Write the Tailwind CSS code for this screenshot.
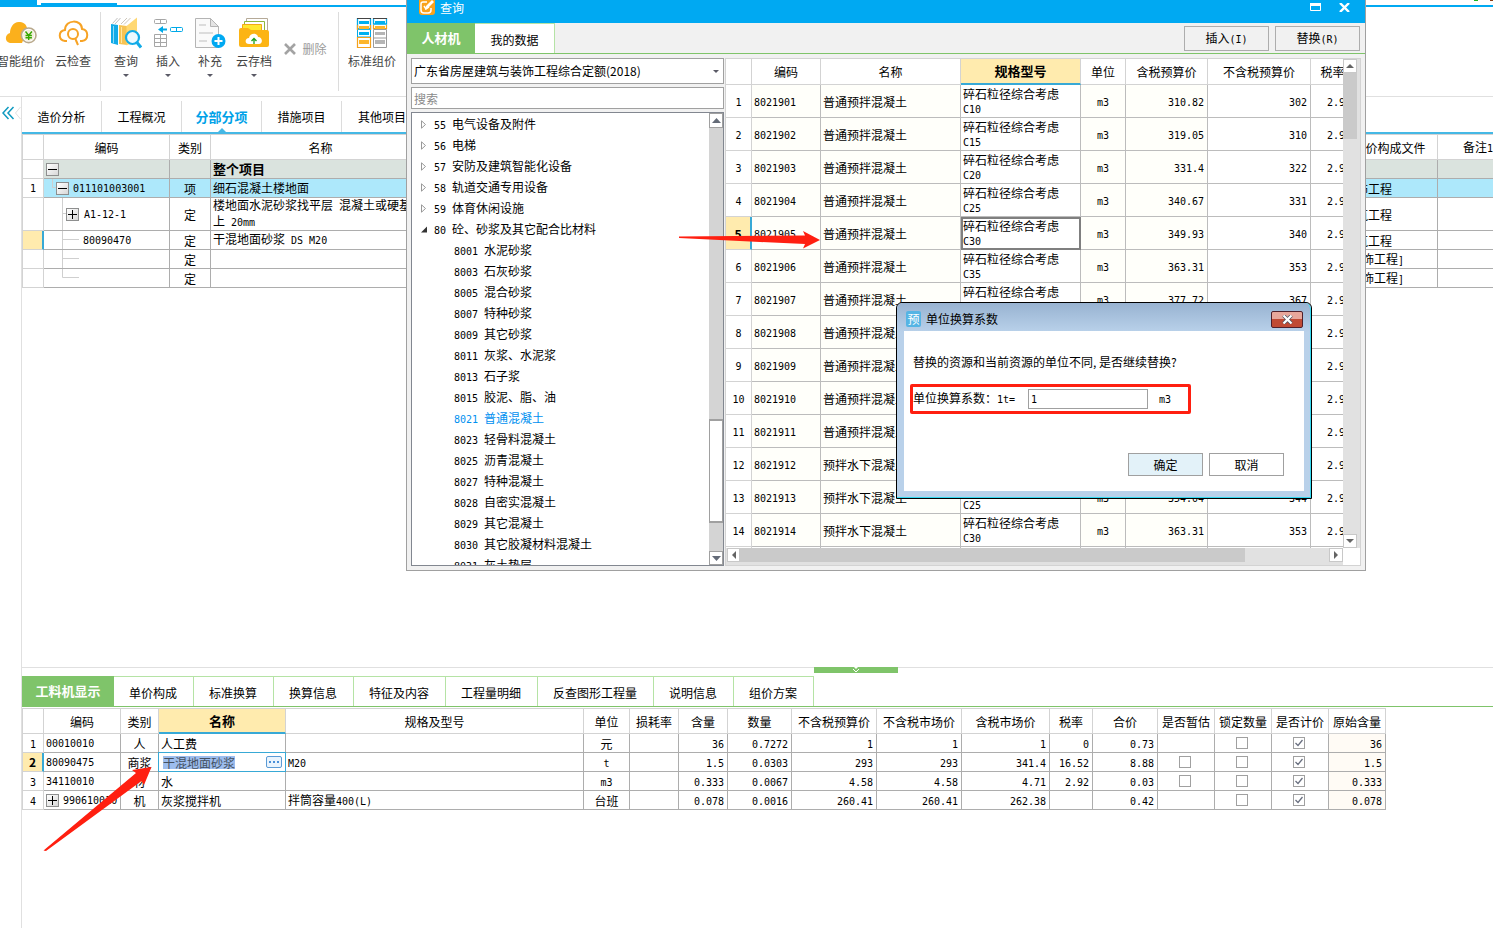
<!DOCTYPE html>
<html lang="zh-CN">
<head>
<meta charset="utf-8">
<title>工程计价</title>
<script src="https://cdn.jsdelivr.net/npm/@tailwindcss/browser@4"></script>
</head>
<body class="relative h-screen overflow-hidden bg-white text-black text-[12px] leading-[14px] font-['Noto_Sans_CJK_SC',sans-serif] flex flex-col">

<!-- Ribbon -->
<header class="shrink-0">
  <div class="relative h-[7px] border-b-2 border-[#00a9f2] flex items-end">
    <div class="h-full w-[37px] bg-[#00a9f2]"></div>
    <div class="ml-1 h-[2px] w-[76px] bg-[#00a9f2]"></div>
    <div class="ml-auto mr-3 self-start h-px w-1 bg-[#1fb41f]"></div>
    <div class="self-start h-px w-[3px] bg-[#8a3a12]"></div>
  </div>
  <nav class="h-[90px] border-b border-[#e0e0e0] flex items-start text-[#444] whitespace-nowrap">
    <button class="w-[42px] mr-1 pt-[10px] flex flex-col items-center gap-[5px]">
      <svg class="size-8 shrink-0" viewBox="0 0 32 32"><path d="M5 26C-1 25 0 17 5 16 5 10 9 4 15 5c5 0 8 5 7 9l-5 12z" fill="#fbb01c"/><circle cx="23.7" cy="18.3" r="7.3" fill="#fff" stroke="#b9a98c" stroke-width="1.6"/><circle cx="23.7" cy="18.3" r="5.6" fill="#f4efdc"/><path d="M20.5 14.5l3.2 4 3.2-4M23.7 18v5M20.5 18.5h6.4M20.5 20.8h6.4" stroke="#35a800" stroke-width="1.4" fill="none"/></svg>
      <span>智能组价</span>
    </button>
    <button class="w-[54px] pt-[10px] flex flex-col items-center gap-[5px]">
      <svg class="size-8" viewBox="0 0 32 32" fill="none" stroke="#f7a325" stroke-width="2"><path d="M10 24H8C1 23 1 14 8 13 8 2 25 2 25 12c7 1 7 11 0 12h-2"/><circle cx="16" cy="17" r="5"/><path d="M18 21l3 7"/></svg>
      <span>云检查</span>
    </button>
    <div class="mt-[5px] h-[79px] w-px bg-[#dcdcdc]"></div>
    <button class="w-[50px] pt-[10px] flex flex-col items-center gap-[5px]">
      <svg class="size-8" viewBox="0 0 32 32"><path d="M1 7l6-6.500h8L8 8z" fill="#fff"/><path d="M2.500 6.500l5-5.500M5 7l5.500-6" stroke="#b0b0b0" stroke-width=".8"/><path d="M1 7l7 1v20l-7-2z" fill="#12abe8"/><path d="M3.500 9v17" stroke="#8fdcf8"/><path d="M9 7l7-6.500h11L18 9z" fill="#fff"/><path d="M11 7l6-6M14 7.500l6.500-6.500" stroke="#c0b8a8" stroke-width=".8"/><path d="M9 8l8 1v19l-8-1z" fill="#f6c352"/><path d="M11.500 10v16" stroke="#ffe6a0"/><path d="M16.500 9L27 .500v23l-10.500 5z" fill="#ffd873"/><circle cx="22.500" cy="20.500" r="6.500" fill="#eefaff" stroke="#12abe8" stroke-width="2.200"/><path d="M27 25.500l4 5" stroke="#12abe8" stroke-width="3"/></svg>
      <span>查询</span>
      <svg class="w-[6px] h-[3px] mt-[1px]" viewBox="0 0 6 3"><path d="M0 0h6L3 3z" fill="#5a5a66"/></svg>
    </button>
    <button class="w-[34px] pt-[10px] flex flex-col items-center gap-[5px]">
      <svg class="size-8" viewBox="0 0 32 32" fill="none" stroke="#a6a6a6"><rect x="2.500" y="2.500" width="12" height="4" rx="1"/><path d="M8.500 2.500v4"/><path d="M2.500 17.500h12v12h-12zM2.500 21.500h12M2.500 25.500h12M8.500 17.500v12"/><rect x="18.500" y="10.500" width="12" height="4" rx="1" stroke="#00a9e8"/><path d="M24.500 10.500v4" stroke="#00a9e8"/><path d="M6 12.500l5-3.500v2.500h4v2h-4V16z" fill="#00a9e8" stroke="none"/></svg>
      <span>插入</span>
      <svg class="w-[6px] h-[3px] mt-[1px]" viewBox="0 0 6 3"><path d="M0 0h6L3 3z" fill="#5a5a66"/></svg>
    </button>
    <button class="w-[50px] pt-[10px] flex flex-col items-center gap-[5px]">
      <svg class="size-8" viewBox="0 0 32 32"><path d="M1.500 1.500h15l8 8v21h-23z" fill="#fafafa" stroke="#b4b4b4"/><path d="M16.500 1.500v8h8z" fill="#e4e4e4" stroke="#b4b4b4"/><path d="M5 8h7M5 16h14M5 24h8" stroke="#dcdcdc" stroke-width="2"/><circle cx="24.500" cy="24" r="7" fill="#00a9f2"/><path d="M24.500 20v8M20.500 24h8" stroke="#fff" stroke-width="2"/></svg>
      <span>补充</span>
      <svg class="w-[6px] h-[3px] mt-[1px]" viewBox="0 0 6 3"><path d="M0 0h6L3 3z" fill="#5a5a66"/></svg>
    </button>
    <button class="w-[38px] pt-[10px] flex flex-col items-center gap-[5px]">
      <svg class="size-8" viewBox="0 0 32 32"><path d="M8.500 14V1.500h21V16" fill="#fff" stroke="#b5aa98"/><path d="M6.500 14V4.500h20V16" fill="#fff" stroke="#8fb83a"/><path d="M4.500 16V7.500h19V16" fill="#ffe92e" stroke="#f0a818"/><path d="M1 13q0-2 2-2h7l3 2h16q2 0 2 2v13q0 2-2 2H3q-2 0-2-2z" fill="#fcb414"/><path d="M11 27c-5 0-4-6 0-6 1-6 9-5 9-1 5 0 5 7 1 7z" fill="#fff"/><path d="M16 27v-5M13.500 24l2.500-2.500 2.500 2.500" stroke="#1da11d" stroke-width="1.300" fill="none"/></svg>
      <span>云存档</span>
      <svg class="w-[6px] h-[3px] mt-[1px]" viewBox="0 0 6 3"><path d="M0 0h6L3 3z" fill="#5a5a66"/></svg>
    </button>
    <button class="w-[65px] h-[84px] flex items-center justify-center gap-[6px] text-[#9a9a9a]" disabled>
      <svg class="size-3" viewBox="0 0 12 12"><path d="M1 1l10 10M11 1L1 11" stroke="#a3a3a3" stroke-width="2.600"/></svg>
      <span>删除</span>
    </button>
    <div class="mt-[5px] h-[79px] w-px bg-[#dcdcdc]"></div>
    <button class="w-[66px] pt-[10px] flex flex-col items-center gap-[5px]">
      <svg class="size-8" viewBox="0 0 32 32" fill="none"><path d="M1.500 1v11h13V1M17.500 1v6h13V1" stroke="#00a9e8" stroke-width="1.300"/><path d="M1 1.500h14M17 1.500h14" stroke="#444"/><path d="M3 4h10v3H3zM19 4h10v3H19zM3 15h10v3H3z" fill="#00b0f0"/><path d="M1.500 12v8h13v-8z" stroke="#00a9e8"/><path d="M1.500 8v5M14.500 8v5M17.500 8v3.500h13V8M1.500 20.500v10h13v-10z" stroke="#f4a11c" stroke-width="1.200"/><path d="M3 9h10v3H3zM19 9h10v3H19zM3 23h10v4H3z" fill="#fdb52a"/><path d="M17.500 12.500v18h13v-18zM17.500 21h13" stroke="#9a9a9a"/><path d="M19 15h10v3H19zM19 23h10v4H19z" fill="#b5b5b5"/></svg>
      <span>标准组价</span>
    </button>
  </nav>
</header>

<div class="flex-1 min-h-0 flex">
  <aside class="relative w-[22px] shrink-0 border-r border-[#e0e0e0]">
    <button aria-label="收起" class="block pt-[9px] pl-[2px]"><svg class="w-[20px] h-[14px]" viewBox="0 0 20 14" fill="none"><path d="M6.500 1L1 7l5.500 6M11.500 1L6 7l5.500 6" stroke="#0f9ac0" stroke-width="1.500"/><path d="M18.500 1L13.500 7l5 6" stroke="#e0e0e0"/></svg></button>
  </aside>

  <main class="flex-1 min-w-0 flex flex-col">
    <nav class="shrink-0 h-[37px] pt-1 border-b-2 border-[#45b8e5] flex">
      <a href="#" class="w-20 border-r border-[#dcdcdc] flex items-center justify-center">造价分析</a>
      <a href="#" class="w-20 border-r border-[#dcdcdc] flex items-center justify-center">工程概况</a>
      <a href="#" class="relative w-20 border-r border-[#dcdcdc] flex items-center justify-center text-[13px] font-bold text-[#00a2e8]">分部分项<svg class="absolute bottom-0 left-[36px] w-2 h-1" viewBox="0 0 8 4"><path d="M0 4l4-4 4 4z" fill="#45b8e5"/></svg></a>
      <a href="#" class="w-20 border-r border-[#dcdcdc] flex items-center justify-center">措施项目</a>
      <a href="#" class="w-20 flex items-center justify-center">其他项目</a>
    </nav>

    <div class="flex-1 min-h-0 overflow-hidden">
      <table class="w-[calc(100%+26px)] table-fixed border-separate border-spacing-0 border-l border-t border-[#d3d3d3]">
        <colgroup><col class="w-[21px]"><col class="w-[126px]"><col class="w-[41px]"><col class="w-[220px]"><col><col class="w-[96px]"><col class="w-[81px]"></colgroup>
        <thead><tr id="upperHead"></tr></thead>
        <tbody id="upperBody"></tbody>
      </table>
    </div>

    <!-- Resource detail panel -->
    <section class="relative shrink-0 h-[261px] border-t border-[#e0e0e0]">
      <button aria-label="折叠面板" class="absolute -top-px left-[792px] w-[84px] h-[6px] bg-[#7fc46a] flex justify-center"><svg class="w-2 h-[6px]" viewBox="0 0 8 6" fill="none" stroke="#fff"><path d="M2 0h4L4 2z" fill="#fff" stroke="none"/><path d="M1 2l3 3 3-3"/></svg></button>
      <nav class="mt-2 h-[31px] border-b border-[#7fc46a] flex whitespace-nowrap">
        <a href="#" class="w-[92px] bg-[#7fc46a] text-white font-bold text-[13px] flex items-center justify-center">工料机显示</a>
        <a href="#" class="pl-[15px] pr-4 pt-[2px] border-t border-r border-[#b5e3a5] flex items-center">单价构成</a>
        <a href="#" class="pl-[15px] pr-4 pt-[2px] border-t border-r border-[#b5e3a5] flex items-center">标准换算</a>
        <a href="#" class="pl-[15px] pr-4 pt-[2px] border-t border-r border-[#b5e3a5] flex items-center">换算信息</a>
        <a href="#" class="pl-[15px] pr-4 pt-[2px] border-t border-r border-[#b5e3a5] flex items-center">特征及内容</a>
        <a href="#" class="pl-[15px] pr-4 pt-[2px] border-t border-r border-[#b5e3a5] flex items-center">工程量明细</a>
        <a href="#" class="pl-[15px] pr-4 pt-[2px] border-t border-r border-[#b5e3a5] flex items-center">反查图形工程量</a>
        <a href="#" class="pl-[15px] pr-4 pt-[2px] border-t border-r border-[#b5e3a5] flex items-center">说明信息</a>
        <a href="#" class="pl-[15px] pr-4 pt-[2px] border-t border-r border-[#b5e3a5] flex items-center">组价方案</a>
      </nav>
      <table class="mt-px w-[1364px] table-fixed border-separate border-spacing-0 border-l border-t border-[#d3d3d3] whitespace-nowrap">
        <colgroup><col class="w-[21px]"><col class="w-[77px]"><col class="w-[38px]"><col class="w-[127px]"><col class="w-[298px]"><col class="w-[46px]"><col class="w-[49px]"><col class="w-[49px]"><col class="w-[64px]"><col class="w-[85px]"><col class="w-[85px]"><col class="w-[88px]"><col class="w-[43px]"><col class="w-[65px]"><col class="w-[57px]"><col class="w-[57px]"><col class="w-[57px]"><col class="w-[57px]"></colgroup>
        <thead><tr id="lowerHead"></tr></thead>
        <tbody id="lowerBody"></tbody>
      </table>
    </section>
  </main>
</div>

<!-- Query window -->
<section class="absolute left-[406px] top-0 w-[960px] h-[571px] border border-t-0 border-[#a0a0a0] bg-[#f1f1f1] flex flex-col">
  <header class="shrink-0 h-[23px] bg-[#00a9f2] text-white flex items-start pl-3">
    <svg class="w-4 h-[15px]" viewBox="0 0 16 15"><path d="M0 0h16v12q0 3-3 3H3q-3 0-3-3z" fill="#f9a21b"/><path d="M8 2H4Q2 2 2 4v6q0 3 3 3h4q3 0 3-3V8" fill="none" stroke="#fff" stroke-width="1.500"/><path d="M6 10l1-4 6-6 2 2-6 6z" fill="#fff"/><path d="M5 6l2 3 3-2" stroke="#fff" stroke-width="1.500" fill="none"/></svg>
    <h2 class="ml-[5px] mt-px">查询</h2>
    <button aria-label="最大化" class="ml-auto mt-[3px] mr-[18px]"><svg class="w-[11px] h-2" viewBox="0 0 11 8"><path d="M.5.5h10v7H.5zM0 1.500h11" fill="none" stroke="#fff"/><path d="M0 0h11v3H0z" fill="#fff"/></svg></button>
    <button aria-label="关闭" class="mt-[3px] mr-[15px]"><svg class="w-[11px] h-[9px]" viewBox="0 0 11 9"><path d="M1 0l9 9M10 0L1 9" stroke="#fff" stroke-width="2.400"/></svg></button>
  </header>
  <nav class="shrink-0 h-[31px] border-b border-[#7fc46a] flex">
    <a href="#" class="w-[68px] bg-[#7fc46a] text-white font-bold text-[13px] flex items-center justify-center">人材机</a>
    <a href="#" class="w-20 pt-[2px] bg-white border-t border-r border-[#b5e3a5] flex items-center justify-center">我的数据</a>
    <button class="ml-auto mt-[3px] w-[85px] h-[25px] border border-[#adadad]" data-t="插入(I)"></button>
    <button class="ml-[6px] mr-[5px] mt-[3px] w-[85px] h-[25px] border border-[#adadad]" data-t="替换(R)"></button>
  </nav>
  <div class="flex-1 min-h-0 p-1 flex gap-px">
    <div class="w-[313px] shrink-0 flex flex-col gap-[3px]">
      <div class="relative">
        <select aria-label="定额库" class="block w-full h-[26px] pl-[2px] appearance-none bg-white border border-[#a0a0a0] rounded-none"><option>广东省房屋建筑与装饰工程综合定额(2018)</option></select>
        <svg class="absolute right-[5px] top-[12px] w-[6px] h-[3px]" viewBox="0 0 6 3"><path d="M0 0h6L3 3z" fill="#5a5a66"/></svg>
      </div>
      <input aria-label="搜索" placeholder="搜索" class="h-[22px] shrink-0 px-[2px] bg-white border border-[#a0a0a0] placeholder:text-[#8a8a8a]">
      <div class="flex-1 min-h-0 border border-[#828790] bg-white flex">
        <ul id="tree" class="flex-1 min-w-0 overflow-hidden pt-px"></ul>
        <div class="w-[14px] bg-[#d4d4d4] flex flex-col">
          <button aria-label="向上" class="h-[15px] bg-white border border-[#a0a0a0] flex items-center justify-center"><svg class="w-[9px] h-[5px]" viewBox="0 0 9 5"><path d="M0 5l4.500-5L9 5z" fill="#646b78"/></svg></button>
          <div class="mt-[291px] h-[104px] bg-white border-y-2 border-x border-[#a0a0a0]"></div>
          <button aria-label="向下" class="mt-auto h-[14px] bg-white border border-[#a0a0a0] flex items-center justify-center"><svg class="w-[9px] h-[5px]" viewBox="0 0 9 5"><path d="M0 0l4.500 5L9 0z" fill="#646b78"/></svg></button>
        </div>
      </div>
    </div>
    <div class="flex-1 min-w-0 border border-[#d3d3d3] bg-[#e1e1e1] flex flex-col">
      <div class="flex h-[489px] min-h-0">
        <div class="flex-1 min-w-0 overflow-hidden bg-white">
          <table class="w-[629px] table-fixed border-separate border-spacing-0">
            <colgroup><col class="w-[26px]"><col class="w-[69px]"><col class="w-[140px]"><col class="w-[120px]"><col class="w-[45px]"><col class="w-[82px]"><col class="w-[103px]"><col class="w-[44px]"></colgroup>
            <thead><tr id="queryHead"></tr></thead>
            <tbody id="queryBody"></tbody>
          </table>
        </div>
        <div class="w-[17px] pr-[3px] flex flex-col">
          <button aria-label="向上" class="h-[14px] bg-white border border-[#c8c8c8] flex items-center justify-center"><svg class="w-2 h-1" viewBox="0 0 8 4"><path d="M0 4l4-4 4 4z" fill="#646464"/></svg></button>
          <div class="h-[66px] bg-[#cacaca]"></div>
          <button aria-label="向下" class="mt-auto h-[14px] bg-white border border-[#c8c8c8] flex items-center justify-center"><svg class="w-2 h-1" viewBox="0 0 8 4"><path d="M0 0l4 4 4-4z" fill="#646464"/></svg></button>
        </div>
      </div>
      <div class="flex-1 flex">
        <div class="flex-1 h-[14px] pl-px flex">
          <button aria-label="向左" class="w-[13px] bg-white border border-[#c8c8c8] flex items-center justify-center"><svg class="w-1 h-2" viewBox="0 0 4 8"><path d="M4 0L0 4l4 4z" fill="#646464"/></svg></button>
          <div class="w-[505px] bg-[#cacaca]"></div>
          <button aria-label="向右" class="ml-auto w-[14px] bg-white border border-[#c8c8c8] flex items-center justify-center"><svg class="w-1 h-2" viewBox="0 0 4 8"><path d="M0 0l4 4-4 4z" fill="#646464"/></svg></button>
        </div>
        <div class="w-[17px] bg-white"></div>
      </div>
    </div>
  </div>
</section>

<!-- Unit conversion dialog -->
<section class="absolute left-[896px] top-[302px] w-[416px] h-[197px] rounded-t-md border border-black bg-[#b9d1ea] overflow-hidden">
  <div class="h-full border-r border-b border-[#34d9f0] bg-linear-to-b from-[#98b3d1] to-[#b9d1ea] to-15% pl-[7px] pr-[6px] pb-[6px] flex flex-col rounded-t-md">
    <header class="h-[28px] shrink-0 flex items-center pl-[2px] pt-1">
      <span class="w-[15px] h-4 rounded-xs bg-[#55b4e4] text-white flex items-center justify-center">预</span>
      <h2 class="ml-[5px]">单位换算系数</h2>
      <button aria-label="关闭" class="ml-auto mr-px w-[32px] h-[17px] rounded-xs border border-[#50202a] bg-linear-to-b from-[#e8a79b] from-45% to-[#c04a34] to-50% flex items-center justify-center"><svg class="w-[11px] h-[9px]" viewBox="0 0 11 9"><path d="M1.500.5l8 8M9.500.5l-8 8" stroke="#4a5260" stroke-width="3.600"/><path d="M1.500.5l8 8M9.500.5l-8 8" stroke="#fff" stroke-width="2.200"/></svg></button>
    </header>
    <form class="flex-1 bg-white pt-[24px] flex flex-col">
      <p class="pl-[9px]">替换的资源和当前资源的单位不同<span class="inline-block w-[6px]">,</span>是否继续替换?</p>
      <div class="ml-[6px] mt-[15px] w-[281px] h-[30px] rounded-xs border-3 border-[#ff1f10] flex items-center">
        <label for="ratio" class="w-[115px]"><span data-t="单位换算系数"></span><span class="inline-block w-3">：</span><span data-t="1t="></span></label>
        <input id="ratio" value="1" class="w-[120px] h-5 px-[2px] border border-[#a0a0a0] bg-white text-[10px] font-['DejaVu_Sans_Mono',monospace]">
        <span class="ml-[11px]" data-t="m3"></span>
      </div>
      <div class="mt-[39px] flex justify-end gap-[6px] pr-5">
        <button type="button" class="w-[75px] h-[23px] border border-[#a0a0a0] bg-[#e3f2f9]">确定</button>
        <button type="button" class="w-[75px] h-[23px] border border-[#a0a0a0] bg-white">取消</button>
      </div>
    </form>
  </div>
</section>

<!-- Annotation arrows -->
<svg class="absolute left-[678px] top-[230px] w-[143px] h-5 pointer-events-none" viewBox="678 230 143 20"><path d="M679 236.500L805 235.500 803 231 820 240 803 248.500 805 244 760 242 679 238z" fill="#ff1f10"/></svg>
<svg class="absolute left-[42px] top-[765px] w-[112px] h-[88px] pointer-events-none" viewBox="42 765 112 88"><path d="M43.500 850.500L136 773 132 770 151.500 767 144 785 141.500 781 46 851z" fill="#ff1f10"/></svg>

<script>
// Latin runs use a half-width monospace so that they take half of a Chinese character each.
const t = s => String(s).replace(/[\x20-\x7e]+/g, m => `<span class="text-[10px] font-['DejaVu_Sans_Mono',monospace] whitespace-pre-wrap">${m}</span>`);
document.querySelectorAll('[data-t]').forEach(e => e.innerHTML = t(e.dataset.t));
const $ = id => document.getElementById(id);
const th = (s, c = '') => `<th class="p-0 pt-px font-normal text-center border-r border-b border-[#d3d3d3] ${c}">${t(s)}</th>`;
const expander = sign => `<button aria-label="展开" class="size-[13px] shrink-0 border border-[#8e8f8f] bg-linear-to-br from-white to-[#d8d8d8] p-0 flex items-center justify-center"><svg class="size-[9px]" viewBox="0 0 9 9"><path d="${sign === '+' ? 'M0 4.500h9M4.500 0v9' : 'M0 4.500h9'}" stroke="#000"/></svg></button>`;

// Upper table
$('upperHead').innerHTML = ['', '编码', '类别', '名称', '', '单价构成文件', '备注1'].map(s => th(s, 'h-[25px]')).join('');
const guide = (w, h, d) => `<svg class="shrink-0" width="${w}" height="${h}" viewBox="0 0 ${w} ${h}"><path d="${d}" fill="none" stroke="#cfcfcf"/></svg>`;
const upper = [
  ['', '<span class="w-[2px]"></span>' + expander('-'), '', '<b class="text-[13px]">整个项目</b>', '', 'h-[19px] bg-[#dae3de]'],
  ['1', guide(12, 18, 'M8.500 0v8.500H12') + expander('-') + `<span class="ml-1">${t('011101003001')}</span>`, '项', '细石混凝土楼地面', '装饰工程', 'h-[19px] bg-[#ade8fb]'],
  ['', guide(22, 32, 'M18.500 0v32M18.500 15.500H22') + expander('+') + `<span class="ml-[5px]">${t('A1-12-1')}</span>`, '定', t('楼地面水泥砂浆找平层 混凝土或硬基层上 20mm'), '建筑工程', 'h-[33px]'],
  ['sel', guide(35, 18, 'M18.500 0v18M18.500 8.500H35') + `<span class="ml-1">${t('80090470')}</span>`, '定', t('干混地面砂浆 DS M20'), '建筑工程', 'h-[19px]'],
  ['', guide(35, 18, 'M18.500 0v18M18.500 8.500H35'), '定', '', t('[装饰工程]'), 'h-[19px]'],
  ['', guide(35, 18, 'M18.500 0v8.500H35'), '定', '', t('[装饰工程]'), 'h-[19px]'],
];
$('upperBody').innerHTML = upper.map(([n, code, kind, name, file, c]) => {
  const cell = `p-0 border-r border-b border-[#adadad] ${c}`;
  const head = n === 'sel' ? 'border-r-2 border-r-[#38a9d6] border-b border-b-[#d3d3d3] bg-[#ffebae]' : 'border-r border-b border-[#d3d3d3]';
  return `<tr><td class="p-0 text-center ${head}">${n === 'sel' ? '' : t(n)}</td>
    <td class="${cell}"><div class="flex items-center">${code}</div></td>
    <td class="${cell} pt-px text-center">${kind}</td><td class="${cell} pl-[2px]">${name}</td><td class="${cell}"></td>
    <td class="${cell} pt-px pl-[2px]">${file}</td><td class="${cell}"></td></tr>`;
}).join('');

// Lower table
$('lowerHead').innerHTML = ['', '编码', '类别', '名称', '规格及型号', '单位', '损耗率', '含量', '数量', '不含税预算价', '不含税市场价', '含税市场价', '税率', '合价', '是否暂估', '锁定数量', '是否计价', '原始含量']
  .map((s, i) => i === 3 ? '<th class="p-0 text-center text-[13px] font-bold bg-[#ffebae] border-r border-r-[#d3d3d3] border-b-2 border-b-[#38a9d6]">名称</th>' : th(s, 'h-[25px]')).join('');
const check = (on, label) => `<label class="grid w-[14px] h-3 mx-auto pr-[2px] place-items-center"><input type="checkbox" aria-label="${label}" ${on ? 'checked' : ''} class="col-start-1 row-start-1 size-3 appearance-none border border-[#a0a0a0] bg-white">${on ? '<svg class="col-start-1 row-start-1 size-2" viewBox="0 0 8 8"><path d="M.5 4l2.500 2.500L7.500 1" fill="none" stroke="#6a7080" stroke-width="1.300"/></svg>' : ''}</label>`;
const lower = [
  ['1', '00010010', '人', '人工费', '', '元', '', '36', '0.7272', '1', '1', '1', '0', '0.73', 0, '36'],
  ['2', '80090475', '商浆', '', 'M20', 't', '', '1.5', '0.0303', '293', '293', '341.4', '16.52', '8.88', 1, '1.5'],
  ['3', '34110010', '材', '水', '', 'm3', '', '0.333', '0.0067', '4.58', '4.58', '4.71', '2.92', '0.03', 1, '0.333'],
  ['4', '990610020', '机', '灰浆搅拌机', '拌筒容量400(L)', '台班', '', '0.078', '0.0016', '260.41', '260.41', '262.38', '', '0.42', 0, '0.078'],
];
$('lowerBody').innerHTML = lower.map((r, y) => '<tr>' + r.map((v, i) => {
  const cell = 'h-[19px] p-0 border-r border-b border-[#adadad]';
  if (i === 0) return y === 1
    ? '<td class="p-0 text-center font-bold bg-[#ffebae] border-r-2 border-r-[#38a9d6] border-b border-b-[#d3d3d3]">2</td>'
    : `<td class="p-0 pt-[2px] text-center border-r border-b border-[#d3d3d3]">${t(v)}</td>`;
  if (i === 1) return `<td class="${cell} pt-px pl-[2px]"><div class="flex items-center">${y === 3 ? expander('+') + '<span class="w-1"></span>' : ''}${t(v)}</div></td>`;
  if (i === 3 && y === 1) return `<td class="p-0"><div class="-mt-px -ml-px h-[20px] border border-[#38a9d6] bg-white pl-[2px] pr-[3px] flex items-center"><span class="ml-[2px] bg-[#9dbdee] text-[#44505f] leading-[13px]">干混地面砂浆</span><button aria-label="选择" class="ml-auto w-4 h-3 rounded-xs border border-[#5b9bd5] bg-[#eaf4fd] flex items-center justify-center"><svg class="w-[10px] h-[2px]" viewBox="0 0 10 2"><path d="M0 0h2v2H0zM4 0h2v2H4zM8 0h2v2H8z" fill="#4a90d9"/></svg></button></div></td>`;
  if (i === 2 || i === 5) return `<td class="${cell} pt-[2px] text-center">${t(v)}</td>`;
  if (i === 3 || i === 4) return `<td class="${cell} pt-[2px] pl-[2px]">${t(v)}</td>`;
  if (i === 14) return `<td class="${cell}">${v ? check(false, '是否暂估') : ''}</td><td class="${cell}">${check(false, '锁定数量')}</td><td class="${cell}">${check(true, '是否计价')}</td>`;
  return `<td class="${cell} pt-[2px] text-right pr-[3px] ${i === 15 ? 'bg-[#fffbf5]' : ''}">${t(v)}</td>`;
}).join('') + '</tr>').join('');

// Resource tree
const groups = ['55 电气设备及附件', '56 电梯', '57 安防及建筑智能化设备', '58 轨道交通专用设备', '59 体育休闲设施', '80 砼、砂浆及其它配合比材料'];
const leaves = ['8001 水泥砂浆', '8003 石灰砂浆', '8005 混合砂浆', '8007 特种砂浆', '8009 其它砂浆', '8011 灰浆、水泥浆', '8013 石子浆', '8015 胶泥、脂、油', '8021 普通混凝土', '8023 轻骨料混凝土', '8025 沥青混凝土', '8027 特种混凝土', '8028 自密实混凝土', '8029 其它混凝土', '8030 其它胶凝材料混凝土', '8031 灰土垫层'];
$('tree').innerHTML = groups.map((s, i) => `<li class="h-[21px] pl-2 flex items-center"><svg class="size-[9px] mr-[5px]" viewBox="0 0 9 9">${i === 5 ? '<path d="M7 1.500v6H1z" fill="#333"/>' : '<path d="M1.500.8v7.400L5.500 4.500z" fill="#fff" stroke="#999"/>'}</svg><span>${t(s)}</span></li>`).join('')
  + leaves.map(s => `<li class="h-[21px] pl-[42px] flex items-center ${s.startsWith('8021') ? 'text-[#0090f0]' : ''}"><span>${t(s)}</span></li>`).join('');

// Query results
$('queryHead').innerHTML = ['', '编码', '名称', '规格型号', '单位', '含税预算价', '不含税预算价', '税率']
  .map((s, i) => i === 3 ? '<th class="p-0 text-center text-[13px] font-bold bg-[#ffebae] border-r border-r-[#d3d3d3] border-b-2 border-b-[#38a9d6]">规格型号</th>' : th(s, 'h-[26px]')).join('');
const rows = [
  ['C10', '310.82', '302'], ['C15', '319.05', '310'], ['C20', '331.4', '322'], ['C25', '340.67', '331'], ['C30', '349.93', '340'],
  ['C35', '363.31', '353'], ['C40', '377.72', '367'], ['C45', '391.10', '380'], ['C50', '404.48', '393'], ['C55', '418.89', '407'],
  ['C60', '433.30', '421'], ['C20', '345.81', '336'], ['C25', '354.04', '344'], ['C30', '363.31', '353'],
];
$('queryBody').innerHTML = rows.map(([spec, a, b], i) => {
  const cell = 'p-0 pt-[2px] border-r border-b border-[#bcbcbc]', tint = 'bg-[#fffffa]';
  const head = i === 4 ? 'font-bold bg-[#ffebae] border-r-2 border-r-[#38a9d6] border-b border-b-[#d3d3d3]' : 'border-r border-b border-[#d3d3d3]';
  return `<tr><td class="h-[33px] p-0 pt-[2px] text-center ${head}">${i === 4 ? '5' : t(i + 1)}</td>
    <td class="${cell} ${tint} pl-[2px]">${t(8021901 + i)}</td>
    <td class="${cell} ${tint} pl-[2px]">${i < 11 ? '普通预拌混凝土' : '预拌水下混凝土'}</td>
    <td class="${cell} pl-[2px] ${i === 4 ? 'outline-2 -outline-offset-2 outline-[#7f7f7f]' : ''}">碎石粒径综合考虑<br>${t(spec)}</td>
    <td class="${cell} ${tint} text-center">${t('m3')}</td>
    <td class="${cell} ${tint} text-right pr-[3px]">${t(a)}</td>
    <td class="${cell} text-right pr-[3px]">${t(b)}</td>
    <td class="${cell} text-right pr-[3px]">${t('2.92')}</td></tr>`;
}).join('') + '<tr><td class="h-[3px] border-r border-[#d3d3d3]"></td>' + '<td class="p-0 border-r border-[#bcbcbc]"></td>'.repeat(7) + '</tr>';
</script>
</body>
</html>
